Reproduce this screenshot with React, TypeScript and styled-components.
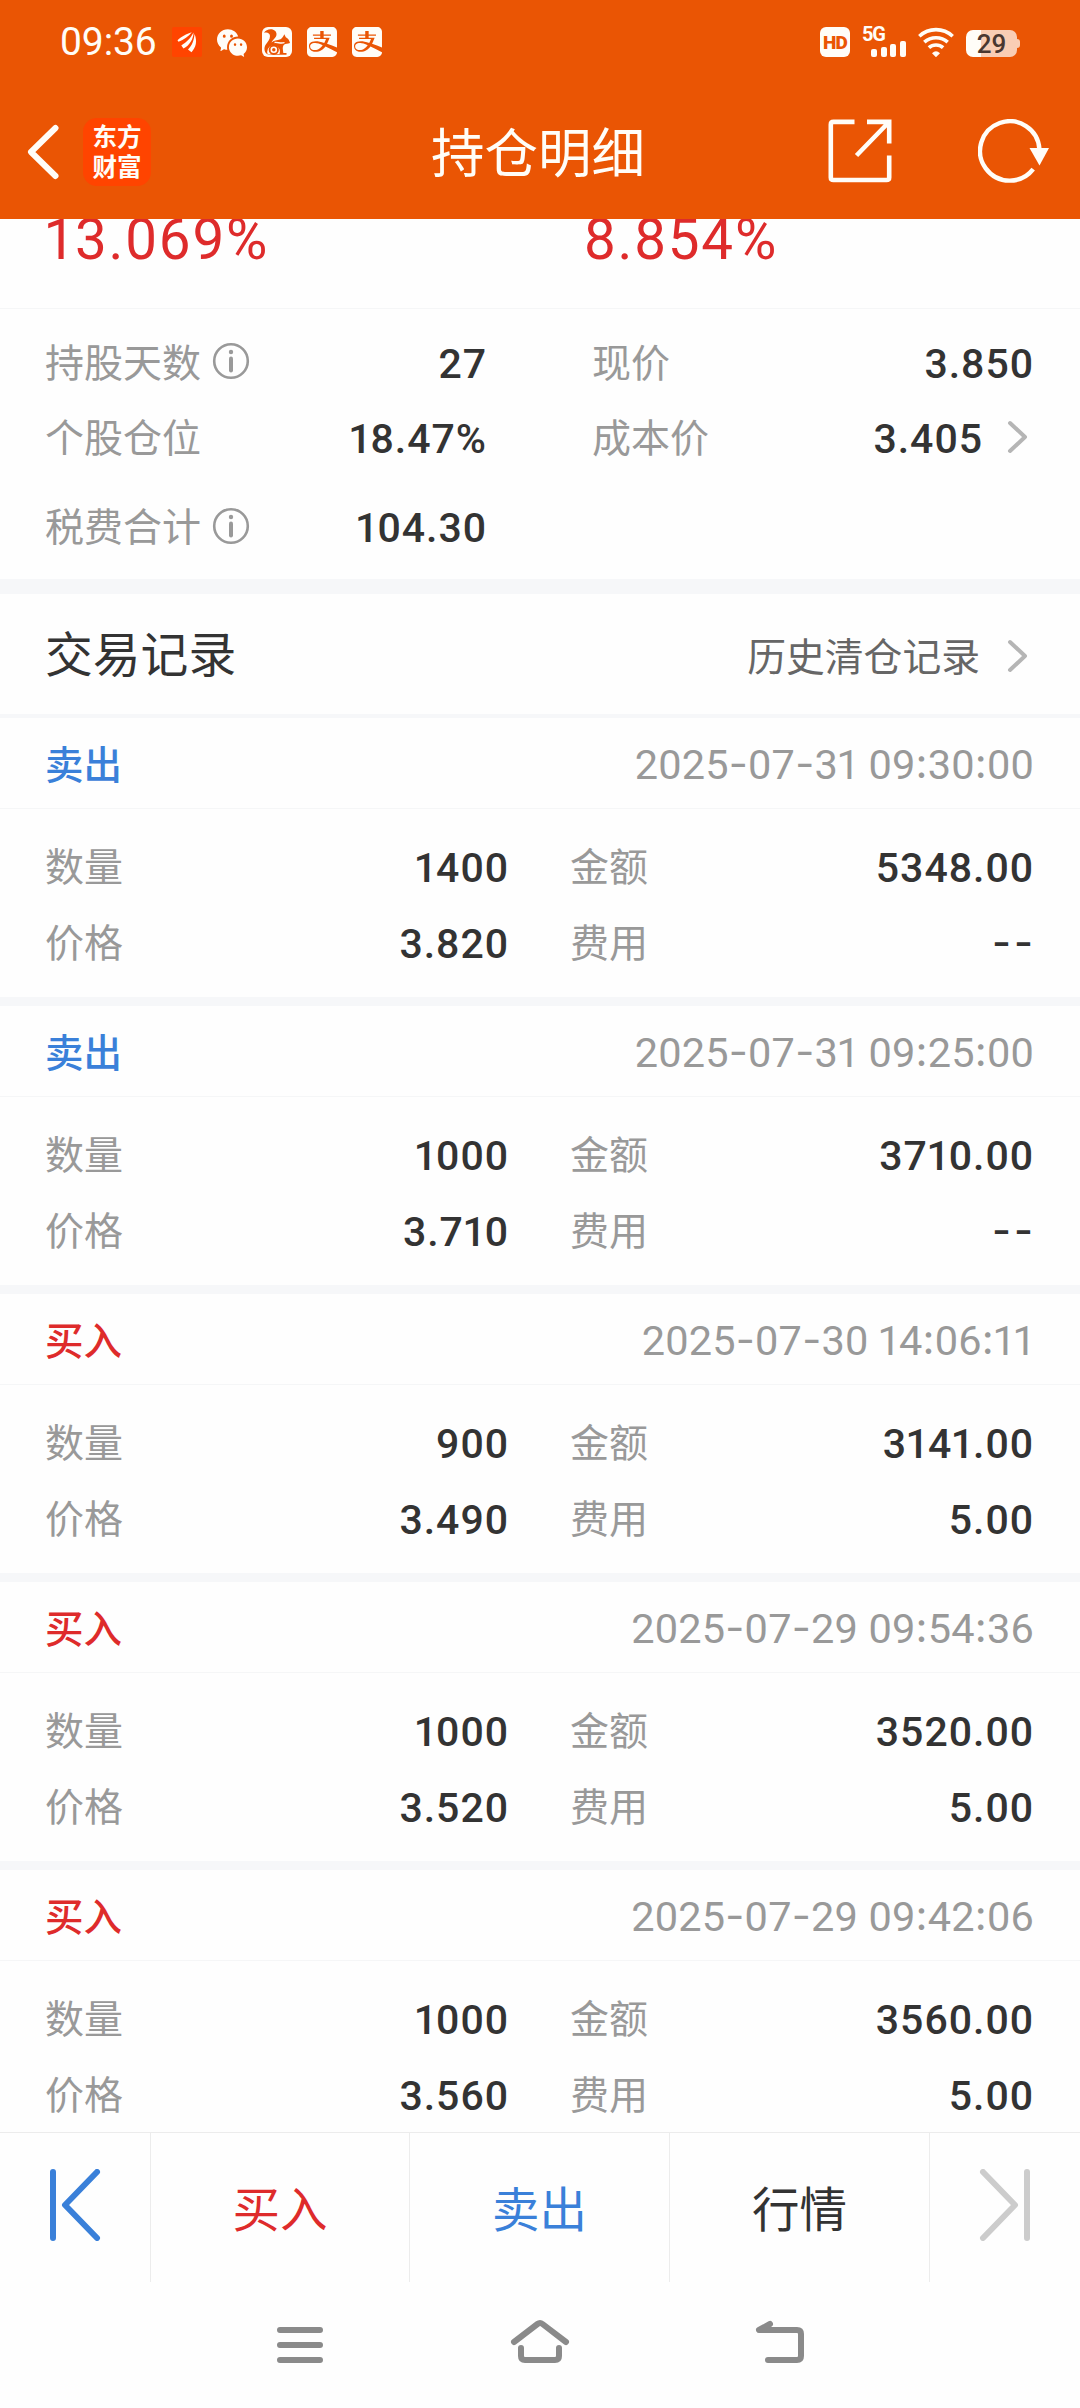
import React from 'react';
import styled, { createGlobalStyle } from 'styled-components';
import { FaAlipay } from 'react-icons/fa';
import { BsWechat } from 'react-icons/bs';

const C = {
  brand: '#ea5504',
  logo: '#ff4400',
  red: '#de2b2b',
  blue: '#3a80d9',
  text: '#333333',
  sub: '#666666',
  label: '#999999',
  band: '#f6f7f9',
  line: '#f5f6f7',
  page: '#fefefe',
};

const Global = createGlobalStyle`
  * { box-sizing: border-box; }
  body {
    margin: 0;
    background: ${C.page};
    color: ${C.text};
    font-family: Roboto, "Noto Sans CJK SC", sans-serif;
  }
`;

const Screen = styled.div`
  width: 1080px;
  height: 2408px;
  display: flex;
  flex-direction: column;
  overflow: hidden;
  background: ${C.page};
`;

const Header = styled.header`
  flex: none;
  height: 219px;
  background: ${C.brand};
  color: #fffdf8;
  display: flex;
  flex-direction: column;
`;

const StatusBar = styled.div`
  height: 84px;
  padding: 0 60px 0 60px;
  display: flex;
  justify-content: space-between;
  align-items: center;
`;

const StatusGroup = styled.div<{ $gap: number }>`
  display: flex;
  align-items: center;
  gap: ${(p) => p.$gap}px;
  svg { display: block; flex: none; }
`;

const Clock = styled.div`
  width: 97px;
  font-size: 39px;
  line-height: 84px;
  letter-spacing: -0.1px;
  white-space: nowrap;
`;

const HdBadge = styled.div`
  width: 30px;
  height: 30px;
  border-radius: 6px;
  background: #fffdf8;
  color: ${C.brand};
  font: 900 19px/31px Roboto, sans-serif;
  letter-spacing: -0.8px;
  text-align: center;
`;

const Signal = styled.div`
  width: 44px;
  height: 30px;
  display: flex;
  flex-direction: column;
`;

const SignalText = styled.div`
  height: 15px;
  font: 700 20px/15px Roboto, sans-serif;
  letter-spacing: -1.2px;
`;

const SignalBars = styled.div`
  height: 15px;
  padding-left: 9px;
  display: flex;
  align-items: flex-end;
  gap: 3.5px;
`;

const SignalBar = styled.i<{ $h: number }>`
  width: 6px;
  height: ${(p) => p.$h}px;
  flex: none;
  border-radius: 2px;
  background: #fffdf8;
`;

const Battery = styled.div`
  display: flex;
  align-items: center;
  margin-top: 3px;
`;

const BatteryBody = styled.div`
  width: 51px;
  height: 27px;
  border-radius: 7px;
  background: linear-gradient(90deg, #fffdf8 0 15px, #f9cdb4 15px);
  color: #4a3730;
  font: 500 26px/28px Roboto, sans-serif;
  text-align: center;
`;

const BatteryNub = styled.i`
  width: 3px;
  height: 9px;
  border-radius: 0 3px 3px 0;
  background: #f9cdb4;
`;

const TitleBar = styled.div`
  height: 135px;
  padding: 0 30px 0 26px;
  display: grid;
  grid-template-columns: 1fr auto 1fr;
  align-items: center;
  svg { display: block; }
`;

const TitleLeft = styled.div`
  display: flex;
  align-items: center;
  gap: 23px;
`;

const TitleRight = styled.div`
  display: flex;
  align-items: center;
  justify-content: flex-end;
  gap: 86px;
  margin-top: -2px;
`;

const AppLogo = styled.div`
  width: 68px;
  height: 68px;
  padding-top: 3px;
  border-radius: 14px;
  background: ${C.logo};
  font: 700 24.5px/30px "Noto Sans CJK SC", sans-serif;
  text-align: center;
`;

const Title = styled.h1`
  margin: 0;
  padding-top: 7px;
  font-size: 53.5px;
  font-weight: 400;
  line-height: 72px;
`;

const Scroll = styled.main`
  flex: 1;
  min-height: 0;
  overflow: hidden;
`;

const Rates = styled.section`
  height: 90px;
  padding: 0 45px;
  display: grid;
  grid-template-columns: 539px 1fr;
  border-bottom: 1px solid ${C.line};
`;

const Rate = styled.div`
  margin-top: -13px;
  height: 68px;
  color: ${C.red};
  font-size: 56.5px;
  line-height: 68px;
  letter-spacing: 1.8px;
`;

const Summary = styled.section`
  height: 270px;
  padding: 16px 46px 0 45px;
  display: grid;
  grid-template-columns: 442px 442px;
  grid-template-rows: 75px 75px 104px;
  column-gap: 105px;
`;

const Pair = styled.div`
  display: flex;
  align-items: center;
  justify-content: space-between;
`;

const Label = styled.span`
  display: inline-flex;
  align-items: center;
  gap: 11px;
  padding-top: 2px;
  color: ${C.label};
  font-size: 39px;
  line-height: 56px;
  svg { display: block; }
`;

const Value = styled.span`
  display: inline-flex;
  align-items: center;
  font-size: 41px;
  font-weight: 500;
  line-height: 56px;
  letter-spacing: 1px;
  white-space: pre;
  padding-top: 2px;
  svg { display: block; margin: -4px 6px 0 24px; }
`;

const Band = styled.div<{ $h: number }>`
  height: ${(p) => p.$h}px;
  background: ${C.band};
`;

const SectionHead = styled.div`
  height: 120px;
  padding: 0 52px 0 45px;
  display: flex;
  align-items: center;
  justify-content: space-between;
`;

const SectionTitle = styled.h2`
  margin: 0;
  padding-top: 4px;
  font-size: 47.8px;
  font-weight: 400;
  line-height: 70px;
`;

const HistoryLink = styled.a`
  display: flex;
  align-items: center;
  gap: 27px;
  padding-top: 7px;
  color: ${C.sub};
  font-size: 38.8px;
  line-height: 56px;
  svg { display: block; margin-top: -3px; }
`;

const Trade = styled.article`
  height: 288px;
`;

const TradeHead = styled.div`
  height: 91px;
  padding: 1px 46px 0 45px;
  display: flex;
  align-items: center;
  justify-content: space-between;
  border-bottom: 1px solid ${C.line};
`;

const Side = styled.span<{ $color: string }>`
  color: ${(p) => p.$color};
  font-size: 38.5px;
  font-weight: 500;
  line-height: 56px;
  padding-top: 4px;
`;

const Time = styled.time`
  color: ${C.label};
  font-size: 41.5px;
  line-height: 56px;
  letter-spacing: 0.2px;
  padding-top: 2px;
  white-space: pre;
`;

const TradeBody = styled.div`
  height: 188px;
  padding: 20px 46px 0 45px;
  display: grid;
  grid-template-columns: 464px 464px;
  grid-template-rows: 76px 76px;
  column-gap: 61px;
`;

const Sep = styled.span<{ $wide: boolean }>`
  font-family: Inter, sans-serif;
  line-height: 1;
  vertical-align: 1px;
  margin-right: ${(p) => (p.$wide ? 2 : 0)}px;
`;

const One = styled.span`
  margin: 0 -2px 0 -1.5px;
`;

const ActionBar = styled.nav`
  flex: none;
  height: 150px;
  display: grid;
  grid-template-columns: 151px 259px 260px 260px 150px;
  border-top: 1px solid #ececec;
`;

const Action = styled.button<{ $color?: string }>`
  border: 0;
  border-right: 1px solid #ececec;
  padding: 0 0 2px;
  background: none;
  color: ${(p) => p.$color || C.text};
  font: 400 47.5px/70px "Noto Sans CJK SC", sans-serif;
  display: flex;
  align-items: center;
  justify-content: center;
  &:last-child { border-right: 0; padding-right: 1px; }
  svg { display: block; margin-top: -3px; }
`;

const SystemNav = styled.nav`
  flex: none;
  height: 126px;
  padding: 0 275px;
  display: flex;
  justify-content: space-between;
  align-items: flex-start;
  svg { display: block; margin-top: 35px; }
`;

/* Separators are wider than the digits' own font has them; the digit one is narrower. */
const Num = ({ children }: { children: string }) => (
  <span>
    {children.split(/([-:1])/).map((part, i) => {
      if (part === '-' || part === ':') {
        return <Sep key={i} $wide={children === '--' && i === 1}>{part}</Sep>;
      }
      return part === '1' ? <One key={i}>1</One> : part;
    })}
  </span>
);

const Chevron = () => (
  <svg width="21" height="34" viewBox="0 0 21 34" fill="none" stroke="#b5b5b5" strokeWidth="4" strokeLinecap="round" strokeLinejoin="round">
    <path d="M3 3 18 17 3 31" />
  </svg>
);

const InfoSvg = styled.svg`
  margin-top: -5px;
`;

const Info = () => (
  <InfoSvg width="38" height="38" viewBox="0 0 38 38" fill="none" stroke={C.label} strokeWidth="2.6">
    <circle cx="19" cy="19" r="16.8" />
    <path d="M19 16.5V28.5" strokeWidth="4" strokeLinecap="round" />
    <circle cx="19" cy="10" r="2.2" fill={C.label} stroke="none" />
  </InfoSvg>
);

const BrokerIcon = () => (
  <svg width="30" height="30" viewBox="0 0 30 30">
    <rect width="30" height="30" rx="2" fill={C.logo} />
    <path fill="#fffdf8" d="M5.500 13.200C10 9 14 7.200 19.800 5.200 16.500 9.500 12 12.500 6.500 14.800ZM9.300 18.500C15 14.500 18.500 11.500 21.500 5.500 21.500 12 17.500 18.500 11.500 21.500ZM16 22.500C20.500 18 22 13 22.500 7 25.500 14 24 20.500 19.500 25.200Z" />
  </svg>
);

const SquirrelIcon = () => (
  <svg width="30" height="30" viewBox="0 0 30 30">
    <rect width="30" height="30" rx="6" fill="#fffdf8" />
    <path
      fill={C.brand}
      d="M2 5.800C4.500.8 14 .8 14.500 6.800 14.800 10.800 10.500 12.500 9.500 15.500 11.500 13.300 15 13.500 18.500 12.200 20.500 11.300 21.300 9.300 22.300 7.300L23.800 10.300C26 11.200 27.500 13.500 28 16 25.500 17 23.800 16.600 22.300 17.500 20.800 18.800 20.500 20.800 21 23.500L21.300 26H24.500V27.800H6.500C2 26 1.500 21 3.800 17.500 5.800 14.500 8 12.500 8 9 8 5.800 4.800 4.800 2 5.800Z"
    />
    <path d="M12.500 15.500C16 15 19 17 22.500 15.500" fill="none" stroke="#fffdf8" strokeWidth="1.300" />
    <path d="M5.800 27.500A6.400 6.400 0 1 1 18 24.500L17.500 27" fill="#fffdf8" />
    <circle cx="11.800" cy="22.800" r="4.200" fill="none" stroke={C.brand} strokeWidth="1.800" />
    <circle cx="11.800" cy="22.800" r="1.700" fill={C.brand} />
  </svg>
);

const WifiIcon = () => (
  <svg width="36" height="30" viewBox="0 0 36 30" fill="none" stroke="#fffdf8" strokeWidth="3.600">
    <path d="M1.300 9.200A24.500 24.500 0 0 1 34.700 9.200" />
    <path d="M6.300 15.200A17.500 17.500 0 0 1 29.700 15.200" />
    <path d="M10.900 20.700A10.500 10.500 0 0 1 25.100 20.700" />
    <path d="M14 26.300Q18 22.300 22 26.300L18 30.200Z" fill="#fffdf8" stroke="none" />
  </svg>
);

const BackIcon = () => (
  <svg width="34" height="56" viewBox="0 0 34 56" fill="none" stroke="#fffdf8" strokeWidth="6" strokeLinejoin="round" strokeLinecap="round">
    <path d="M29.500 4 5 28 29.500 52" />
  </svg>
);

const ShareIcon = () => (
  <svg width="64" height="64" viewBox="0 0 64 64" fill="none" stroke="#fffdf8" strokeWidth="4.600">
    <path d="M26.500 2.900H5.500Q2.800 2.900 2.800 5.500V58.500Q2.800 61 5.500 61H58.500Q61.200 61 61.200 58.500V36.500" />
    <path d="M39 2.900H61.200V24.500M61 3 28.500 36.500" />
  </svg>
);

const RefreshIcon = () => (
  <svg width="72" height="64" viewBox="0 0 72 64">
    <path d="M55.200 50.200A29.700 29.700 0 1 1 61.400 30" fill="none" stroke="#fffdf8" strokeWidth="4.400" />
    <path d="M51.500 29H71L61.500 46.500Z" fill="#fffdf8" />
  </svg>
);

const EdgeIcon = ({ color, flip }: { color: string; flip?: boolean }) => (
  <svg width="52" height="72" viewBox="0 0 52 72" fill="none" stroke={color} strokeWidth="6" strokeLinecap="round" strokeLinejoin="round">
    <g transform={flip ? 'translate(52 0) scale(-1 1)' : undefined}>
      <path d="M4 3V69M48 3 16 36 48 69" />
    </g>
  </svg>
);

const navStroke = { fill: 'none', stroke: '#8a8a8a', strokeWidth: 6, strokeLinecap: 'round' as const, strokeLinejoin: 'round' as const };

type TradeRow = { side: 'buy' | 'sell'; time: string; qty: string; amount: string; price: string; fee: string };

const trades: TradeRow[] = [
  { side: 'sell', time: '2025-07-31 09:30:00', qty: '1400', amount: '5348.00', price: '3.820', fee: '--' },
  { side: 'sell', time: '2025-07-31 09:25:00', qty: '1000', amount: '3710.00', price: '3.710', fee: '--' },
  { side: 'buy', time: '2025-07-30 14:06:11', qty: '900', amount: '3141.00', price: '3.490', fee: '5.00' },
  { side: 'buy', time: '2025-07-29 09:54:36', qty: '1000', amount: '3520.00', price: '3.520', fee: '5.00' },
  { side: 'buy', time: '2025-07-29 09:42:06', qty: '1000', amount: '3560.00', price: '3.560', fee: '5.00' },
];

const Field = ({ label, value, info, more }: { label: string; value: string; info?: boolean; more?: boolean }) => (
  <Pair>
    <Label>
      {label}
      {info && <Info />}
    </Label>
    <Value>
      <Num>{value}</Num>
      {more && <Chevron />}
    </Value>
  </Pair>
);

export default function App() {
  return (
    <>
      <Global />
      <Screen>
        <Header>
          <StatusBar>
            <StatusGroup $gap={15}>
              <Clock>09:36</Clock>
              <BrokerIcon />
              <BsWechat size={30} preserveAspectRatio="none" viewBox="0 1 16 14" />
              <SquirrelIcon />
              <FaAlipay size={30} viewBox="0 32 448 448" />
              <FaAlipay size={30} viewBox="0 32 448 448" />
            </StatusGroup>
            <StatusGroup $gap={12}>
              <HdBadge>HD</HdBadge>
              <Signal>
                <SignalText>5G</SignalText>
                <SignalBars>
                  {[8.5, 10, 13, 16].map((h) => (
                    <SignalBar key={h} $h={h} />
                  ))}
                </SignalBars>
              </Signal>
              <WifiIcon />
              <Battery>
                <BatteryBody>29</BatteryBody>
                <BatteryNub />
              </Battery>
            </StatusGroup>
          </StatusBar>
          <TitleBar>
            <TitleLeft>
              <BackIcon />
              <AppLogo>
                东方
                <br />
                财富
              </AppLogo>
            </TitleLeft>
            <Title>持仓明细</Title>
            <TitleRight>
              <ShareIcon />
              <RefreshIcon />
            </TitleRight>
          </TitleBar>
        </Header>

        <Scroll>
          <Rates>
            <Rate>
              <Num>13.069%</Num>
            </Rate>
            <Rate>8.854%</Rate>
          </Rates>
          <Summary>
            <Field label="持股天数" value="27" info />
            <Field label="现价" value="3.850" />
            <Field label="个股仓位" value="18.47%" />
            <Field label="成本价" value="3.405" more />
            <Field label="税费合计" value="104.30" info />
          </Summary>
          <Band $h={15} />
          <SectionHead>
            <SectionTitle>交易记录</SectionTitle>
            <HistoryLink>
              历史清仓记录
              <Chevron />
            </HistoryLink>
          </SectionHead>
          <Band $h={4} />
          {trades.map((t) => (
            <Trade key={t.time}>
              <TradeHead>
                <Side $color={t.side === 'buy' ? C.red : C.blue}>{t.side === 'buy' ? '买入' : '卖出'}</Side>
                <Time>
                  <Num>{t.time}</Num>
                </Time>
              </TradeHead>
              <TradeBody>
                <Field label="数量" value={t.qty} />
                <Field label="金额" value={t.amount} />
                <Field label="价格" value={t.price} />
                <Field label="费用" value={t.fee} />
              </TradeBody>
              <Band $h={9} />
            </Trade>
          ))}
        </Scroll>

        <ActionBar>
          <Action aria-label="first">
            <EdgeIcon color={C.blue} />
          </Action>
          <Action $color={C.red}>买入</Action>
          <Action $color={C.blue}>卖出</Action>
          <Action>行情</Action>
          <Action aria-label="last">
            <EdgeIcon color="#cccccc" flip />
          </Action>
        </ActionBar>

        <SystemNav>
          <svg width="50" height="50" viewBox="0 0 50 50" {...navStroke}>
            <path d="M5 13H45M5 28H45M5 43H45" />
          </svg>
          <svg width="60" height="50" viewBox="0 0 60 50" {...navStroke}>
            <path d="M4 25 27.500 7Q30 5 32.500 7L56 25M11 31V39Q11 43 15 43H45Q49 43 49 39V31" />
          </svg>
          <svg width="50" height="50" viewBox="0 0 50 50" {...navStroke}>
            <path d="M15 7 4 13H42Q46 13 46 17V39Q46 43 42 43H13" />
          </svg>
        </SystemNav>
      </Screen>
    </>
  );
}
